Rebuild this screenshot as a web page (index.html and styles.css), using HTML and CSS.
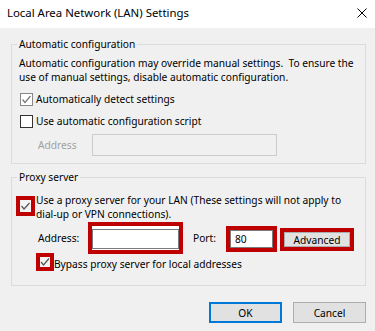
FILE: index.html
```html
<!DOCTYPE html>
<html lang="en">
<head>
<meta charset="utf-8">
<title>Local Area Network (LAN) Settings</title>
<link rel="stylesheet" href="styles.css">
</head>
<body>
<div class="dialog">
  <div class="titlebar">
    <span class="title">Local Area Network (LAN) Settings</span>
    <svg class="close" width="10" height="10" viewBox="0 0 10 10"><path d="M0.5 0.5 L9.5 9.5 M9.5 0.5 L0.5 9.5" stroke="#000" stroke-width="1" fill="none"/></svg>
  </div>
  <div class="content">
    <fieldset class="group group-auto">
      <legend>Automatic configuration</legend>
      <p class="desc">Automatic configuration may override manual settings.&nbsp; To ensure the use of manual settings, disable automatic configuration.</p>
      <div class="check-row row-detect">
        <span class="cb cb-checked"><svg width="11" height="11" viewBox="0 0 11 11"><path d="M1.5 5.5 L4 8.5 L9.5 2" stroke="#777" stroke-width="1.2" fill="none"/></svg></span>
        <span class="cb-label">Automatically detect settings</span>
      </div>
      <div class="check-row row-script">
        <span class="cb"></span>
        <span class="cb-label">Use automatic configuration script</span>
      </div>
      <div class="addr-row">
        <span class="addr-label disabled">Address</span>
        <span class="textbox disabled-box"></span>
      </div>
    </fieldset>

    <fieldset class="group group-proxy">
      <legend>Proxy server</legend>
      <div class="proxy-row">
        <span class="red-cb red-cb-proxy"><svg width="11" height="12" viewBox="0 0 11 12"><path d="M1.5 6 L4 9 L9.5 3" stroke="#555" stroke-width="1.2" fill="none"/></svg></span>
        <span class="proxy-label">Use a proxy server for your LAN (These settings will not apply to dial-up or VPN connections).</span>
      </div>
      <div class="server-row">
        <span class="srv-label">Address:</span>
        <span class="red-box addr-box"><span class="inner-box"></span></span>
        <span class="port-label">Port:</span>
        <span class="red-box port-box"><span class="inner-box port-inner">80</span></span>
        <span class="red-box adv-box"><span class="adv-btn">Advanced</span></span>
      </div>
      <div class="bypass-row">
        <span class="red-cb red-cb-bypass"><svg width="10" height="10" viewBox="0 0 10 10"><path d="M1 5 L3.5 8 L9 1.5" stroke="#555" stroke-width="1.2" fill="none"/></svg></span>
        <span class="bypass-label">Bypass proxy server for local addresses</span>
      </div>
    </fieldset>

    <div class="buttons">
      <button class="btn btn-ok">OK</button>
      <button class="btn btn-cancel">Cancel</button>
    </div>
  </div>
</div>
</body>
</html>
```

FILE: styles.css
```css
* { box-sizing: border-box; }
html, body { margin: 0; padding: 0; }
body {
  width: 375px;
  height: 331px;
  background: #f0f0f0;
  font-family: "Noto Sans", "Open Sans", sans-serif;
  font-size: 10.2px;
  line-height: 14px;
  color: #000;
  overflow: hidden;
}
.titlebar {
  height: 28px;
  background: #fff;
  display: flex;
  align-items: center;
  justify-content: space-between;
  padding: 0 8px 2px 7px;
}
.title { font-size: 11.4px; }
.close { display: block; }

.content { padding: 0 9px 0 11px; }

.group {
  margin: 0;
  border: 1px solid #dcdcdc;
  padding: 0 7px;
  min-width: 0;
}
.group legend {
  padding: 0 2px;
  margin-left: -2px;
  line-height: 14px;
}
.group-auto { margin-top: 9px; padding-bottom: 7px; }
.group-proxy { margin-top: 6px; padding-bottom: 14px; }

.desc { margin: 5px 0 0 0; }

.check-row { display: flex; align-items: center; height: 14px; }
.row-detect { margin-top: 8px; }
.row-script { margin-top: 8px; }
.cb {
  width: 13px; height: 13px;
  border: 1px solid #333;
  background: #fff;
  margin-left: 1px;
  margin-right: 3px;
  display: flex; align-items: center; justify-content: center;
}
.cb-checked { border-color: #888; }
.cb svg { display: block; }

.addr-row { display: flex; align-items: center; margin-top: 6px; }
.addr-label { margin-left: 19px; width: 54px; }
.disabled { color: #a0a0a0; }
.textbox { display: block; width: 185px; height: 22px; }
.disabled-box { border: 1px solid #cccccc; background: #f0f0f0; }

.proxy-row { display: flex; align-items: flex-start; margin-top: 9px; }
.red-cb {
  flex: none;
  border: 4px solid #bf0000;
  background: #f4f4f4;
  display: flex; align-items: center; justify-content: center;
}
.red-cb-proxy { width: 19px; height: 20px; margin: 3px 1px 0 -3px; }
.proxy-label { flex: 1; }

.server-row { display: flex; align-items: center; margin-top: 1px; height: 32px; }
.srv-label { margin-left: 19px; width: 50px; }
.red-box { display: block; border: 4px solid #bf0000; flex: none; }
.addr-box { width: 95px; height: 32px; background: #fff; padding: 3px 0 1px 0; }
.inner-box { display: block; height: 100%; border: 1px solid #7a7a7a; background: #fff; }
.port-label { margin-left: 10px; width: 33px; }
.port-box { width: 51px; height: 26px; margin-top: 2px; }
.port-inner { padding-left: 4px; line-height: 16px; }
.adv-box { width: 74px; height: 23px; margin-left: 3px; margin-top: 3px; }
.adv-btn {
  display: flex; align-items: center; justify-content: center;
  height: 100%;
  background: #e1e1e1;
  border: 1px solid #adadad;
}

.bypass-row { display: flex; align-items: flex-end; margin-top: -1px; }
.red-cb-bypass { width: 18px; height: 18px; margin-left: 17px; }

.buttons { display: flex; justify-content: flex-end; gap: 11px; margin-top: 16px; }
.btn {
  width: 73px; height: 21px;
  font: inherit;
  line-height: 14px;
  color: #000;
  background: #e1e1e1;
  border: 1px solid #adadad;
  padding: 0;
}
.btn-ok { border: 2px solid #0078d7; }
```
